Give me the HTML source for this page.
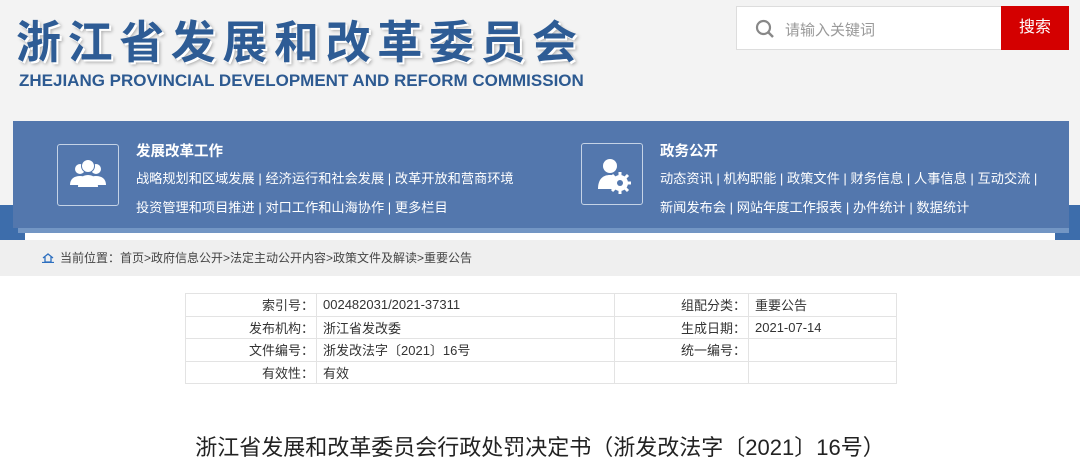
<!DOCTYPE html>
<html><head><meta charset="utf-8"><style>
*{margin:0;padding:0;box-sizing:border-box}
body{width:1080px;height:475px;overflow:hidden;background:#fff;font-family:"Liberation Sans","Noto Sans CJK SC",sans-serif;position:relative}
.abs{position:absolute}
.hdr{left:0;top:0;width:1080px;height:240px;background:#f3f3f3}
.band{left:0;top:205px;width:1080px;height:35px;background:#3d6dab}
.white{left:25px;top:232px;width:1030px;height:10px;background:#fff}
.crumb{left:0;top:240px;width:1080px;height:36px;background:#efefef;font-size:12px;color:#444;line-height:36px;padding-left:42px}
.cn{left:16px;top:6px;font-size:45px;font-weight:bold;color:#2e5c95;letter-spacing:6.6px;text-shadow:2px 2px 0 #fff,3px 3px 3px #aaa;white-space:nowrap}
.en{left:19px;top:71px;font-size:17px;font-weight:bold;color:#2d5a91;white-space:nowrap}
.search{left:736px;top:6px;width:333px;height:44px;background:#fff;border:1px solid #ddd}
.btn{left:1001px;top:6px;width:68px;height:44px;background:#d40000;color:#fff;font-size:16px;text-align:center;line-height:44px}
.panel{left:13px;top:121px;width:1056px;height:107px;background:#5377ad}
.strip{left:18px;top:228px;width:1051px;height:5px;background:#7396c4}
.ibox{width:62px;height:62px;border:1px solid #c5d3e6;border-radius:3px}
.pt{font-size:14.5px;font-weight:bold;color:#fff}
.pl{font-size:13.2px;color:#fff;white-space:nowrap}
table{position:absolute;left:185px;top:293px;width:712px;border-collapse:collapse;font-size:13px;color:#333}
td{border:1px solid #e3e3e3;height:22.5px;padding:0 6px;white-space:nowrap}
td.l{text-align:right;padding-right:2px}
.title{left:0;width:1080px;top:430px;text-align:center;font-size:22px;color:#222}
</style></head><body>
<div class="abs hdr"></div>
<div class="abs band"></div>
<div class="abs white"></div>
<div class="abs cn">浙江省发展和改革委员会</div>
<div class="abs en">ZHEJIANG PROVINCIAL DEVELOPMENT AND REFORM COMMISSION</div>
<div class="abs search"><svg class="abs" style="left:18px;top:12px" width="20" height="20" viewBox="0 0 20 20"><circle cx="8.5" cy="8.5" r="6.5" fill="none" stroke="#888" stroke-width="2.2"/><line x1="13.5" y1="13.5" x2="18" y2="18" stroke="#888" stroke-width="2.5"/></svg><span class="abs" style="left:48px;top:12px;font-size:15px;color:#999">请输入关键词</span></div>
<div class="abs btn">搜索</div>
<div class="abs panel"></div>
<div class="abs strip"></div>
<div class="abs ibox" style="left:57px;top:144px"><svg width="60" height="60" viewBox="0 0 60 60"><g fill="#fff"><circle cx="22" cy="24" r="5"/><circle cx="38" cy="24" r="5"/><path d="M12 40c0-6 4-9 10-9s8 3 8 9z"/><path d="M30 40c0-6 2-9 8-9s10 3 10 9z"/><circle cx="30" cy="21" r="6.5"/><path d="M20 42c0-8 4-12 10-12s10 4 10 12z"/></g><circle cx="30" cy="21" r="6.5" fill="none" stroke="#5377ad" stroke-width="1"/></svg></div>
<div class="abs pt" style="left:136px;top:140px">发展改革工作</div>
<div class="abs pl" style="left:136px;top:168px">战略规划和区域发展 | 经济运行和社会发展 | 改革开放和营商环境</div>
<div class="abs pl" style="left:136px;top:197px">投资管理和项目推进 | 对口工作和山海协作 | 更多栏目</div>
<div class="abs ibox" style="left:581px;top:143px"><svg width="60" height="60" viewBox="0 0 60 60"><g fill="#fff"><circle cx="28" cy="22" r="7"/><path d="M16 45c0-10 5-14 12-14 3 0 5 1 6 2v12z"/><circle cx="38" cy="39" r="8"/></g><circle cx="38" cy="39" r="3" fill="#5377ad"/><g stroke="#fff" stroke-width="3"><line x1="38" y1="28" x2="38" y2="50"/><line x1="27" y1="39" x2="49" y2="39"/><line x1="30" y1="31" x2="46" y2="47"/><line x1="46" y1="31" x2="30" y2="47"/></g><circle cx="38" cy="39" r="3" fill="#5377ad"/></svg></div>
<div class="abs pt" style="left:660px;top:140px">政务公开</div>
<div class="abs pl" style="left:660px;top:168px">动态资讯 | 机构职能 | 政策文件 | 财务信息 | 人事信息 | 互动交流 |</div>
<div class="abs pl" style="left:660px;top:197px">新闻发布会 | 网站年度工作报表 | 办件统计 | 数据统计</div>
<div class="abs crumb"><svg class="abs" style="left:42px;top:13px" width="12" height="10" viewBox="0 0 12 10"><path d="M1 5L6 1l5 4M3 4v5h6V4M0 9.5h12" fill="none" stroke="#2d6fbf" stroke-width="1.3"/></svg><span style="margin-left:18px">当前位置：首页&gt;政府信息公开&gt;法定主动公开内容&gt;政策文件及解读&gt;重要公告</span></div>
<table>
<tr><td class="l" style="width:131px">索引号：</td><td style="width:298px">002482031/2021-37311</td><td class="l" style="width:134px">组配分类：</td><td>重要公告</td></tr>
<tr><td class="l">发布机构：</td><td>浙江省发改委</td><td class="l">生成日期：</td><td>2021-07-14</td></tr>
<tr><td class="l">文件编号：</td><td>浙发改法字〔2021〕16号</td><td class="l">统一编号：</td><td></td></tr>
<tr><td class="l">有效性：</td><td>有效</td><td></td><td></td></tr>
</table>
<div class="abs title">浙江省发展和改革委员会行政处罚决定书（浙发改法字〔2021〕16号）</div>
</body></html>
